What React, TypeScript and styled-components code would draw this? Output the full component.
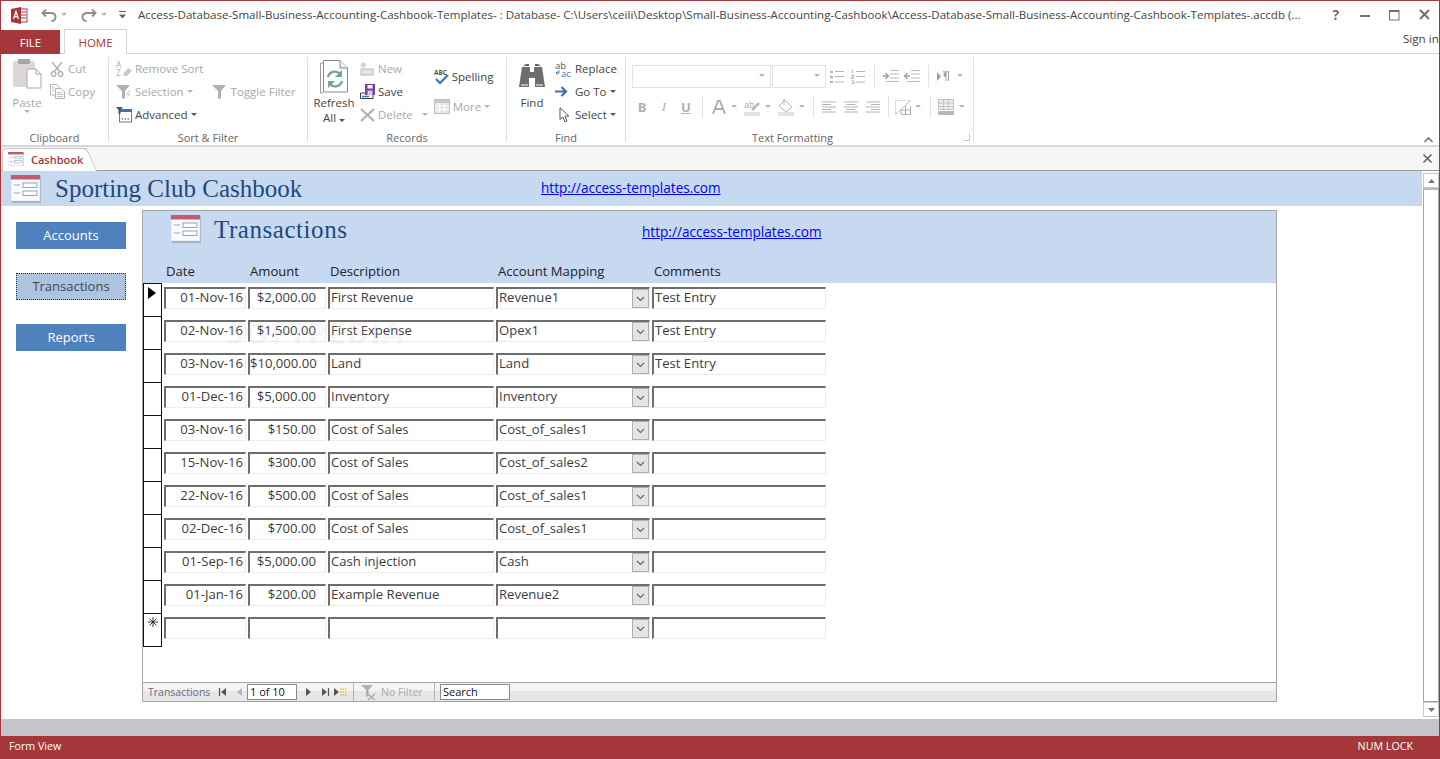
import React from "react";
import styled, { createGlobalStyle } from "styled-components";

const GlobalStyle = createGlobalStyle`
    html, body { margin: 0; padding: 0; background: #fff; }
    body { font-family: "Open Sans", "Noto Sans", sans-serif; overflow: hidden; }
    * { box-sizing: border-box; }
`;

const RED = "#a4373a";
const BAND = "#c6d9f0";

const Window = styled.div`
    position: relative;
    width: 1440px;
    height: 759px;
    display: flex;
    flex-direction: column;
    border: 1px solid ${RED};
    border-bottom: 0;
    overflow: hidden;
`;

// Title bar

const TitleBar = styled.div`
    height: 28px;
    flex: none;
    display: flex;
    align-items: center;
    padding-left: 10px;
`;
const QuickIcon = styled.span<{ $w: number; $ml?: number }>`
    width: ${({ $w }) => $w}px;
    margin-left: ${({ $ml }) => $ml || 0}px;
    flex: none;
    display: flex;
    align-items: center;
    justify-content: center;
`;
const TitleText = styled.div`
    width: 1176px;
    margin-left: 12px;
    margin-top: -1px;
    flex: none;
    font-size: 11.55px;
    color: #444;
    white-space: nowrap;
    overflow: hidden;
`;
const WindowButtons = styled.div`
    margin-left: auto;
    display: flex;
    align-items: center;
`;
const WindowButton = styled.span`
    width: 29.5px;
    display: flex;
    justify-content: center;
    color: #6f6f6f;
    font-weight: 700;
    font-size: 14px;
    line-height: 16px;
`;

// Tabs

const TabRow = styled.div`
    height: 25px;
    flex: none;
    display: flex;
    align-items: flex-end;
    position: relative;
    border-bottom: 1px solid #d4d4d4;
`;
const FileTab = styled.div`
    width: 59px;
    height: 24px;
    margin-bottom: -1px;
    background: ${RED};
    color: #fff;
    font-size: 11.5px;
    display: flex;
    align-items: center;
    justify-content: center;
`;
const HomeTab = styled.div`
    width: 63px;
    height: 25px;
    margin-left: 4px;
    margin-bottom: -1px;
    background: #fff;
    border: 1px solid #d4d4d4;
    border-bottom: 0;
    color: ${RED};
    font-size: 11.5px;
    display: flex;
    align-items: center;
    justify-content: center;
`;
const SignIn = styled.div`
    margin-left: auto;
    align-self: flex-start;
    margin-top: 1px;
    width: 36px;
    font-size: 11.6px;
    line-height: 18px;
    color: #444;
    white-space: nowrap;
`;

// Ribbon

const Ribbon = styled.div`
    height: 93px;
    flex: none;
    display: flex;
    padding-top: 3px;
    border-bottom: 2px solid #d8d8d8;
`;
const Group = styled.div<{ $w: number }>`
    width: ${({ $w }) => $w}px;
    height: 85px;
    flex: none;
    display: flex;
    flex-direction: column;
    border-right: 1px solid #e0e0e0;
    position: relative;
`;
const GroupBody = styled.div`
    flex: 1;
    display: flex;
    align-items: flex-start;
    min-height: 0;
`;
const GroupLabel = styled.div<{ $pr?: number }>`
    height: 15px;
    margin-bottom: -3px;
    padding-right: ${({ $pr }) => $pr || 0}px;
    font-size: 11px;
    line-height: 15px;
    color: #666;
    text-align: center;
`;
const ItemColumn = styled.div<{ $ml?: number; $pt?: number }>`
    display: flex;
    flex-direction: column;
    margin-left: ${({ $ml }) => $ml || 0}px;
    padding-top: ${({ $pt }) => $pt || 0}px;
    flex: none;
`;
const Item = styled.div<{ $off?: boolean; $h?: number }>`
    height: ${({ $h }) => $h || 23}px;
    display: flex;
    align-items: center;
    font-size: 11.5px;
    white-space: nowrap;
    color: ${({ $off }) => ($off ? "#a8a8a8" : "#444")};
`;
const ItemIcon = styled.span<{ $w?: number; $ml?: number; $pl?: number }>`
    width: ${({ $w }) => $w || 19}px;
    margin-left: ${({ $ml }) => $ml || 0}px;
    padding-left: ${({ $pl }) => $pl || 0}px;
    flex: none;
    display: flex;
    align-items: center;
    justify-content: flex-start;
`;
const BigButton = styled.div<{ $off?: boolean; $w: number; $ml?: number }>`
    width: ${({ $w }) => $w}px;
    margin-left: ${({ $ml }) => $ml || 0}px;
    flex: none;
    display: flex;
    flex-direction: column;
    align-items: center;
    font-size: 11.5px;
    line-height: 15px;
    color: ${({ $off }) => ($off ? "#a8a8a8" : "#444")};
`;
const BigIcon = styled.div<{ $h: number; $mb: number }>`
    height: ${({ $h }) => $h}px;
    margin-bottom: ${({ $mb }) => $mb}px;
    display: flex;
    align-items: flex-end;
    justify-content: center;
`;
const Caret = styled.span<{ $off?: boolean; $ml?: number }>`
    display: inline-block;
    width: 0;
    height: 0;
    margin-left: ${({ $ml }) => ($ml === undefined ? 3 : $ml)}px;
    border-left: 3px solid transparent;
    border-right: 3px solid transparent;
    border-top: 3px solid ${({ $off }) => ($off ? "#b4b4b4" : "#555")};
`;
const TextFormatBody = styled.div`
    padding: 7px 0 0 6px;
    flex: 1;
`;
const ToolRow = styled.div<{ $mt?: number }>`
    height: 24px;
    margin-top: ${({ $mt }) => $mt || 0}px;
    display: flex;
    align-items: center;
`;
const Combo = styled.div<{ $w: number; $ml?: number }>`
    width: ${({ $w }) => $w}px;
    height: 23px;
    margin-left: ${({ $ml }) => $ml || 0}px;
    flex: none;
    border: 1px solid #e2e2e2;
    display: flex;
    align-items: center;
    justify-content: flex-end;
    padding-right: 5px;
`;
const Cell = styled.div<{ $w: number; $ml?: number }>`
    width: ${({ $w }) => $w}px;
    margin-left: ${({ $ml }) => $ml || 0}px;
    flex: none;
    display: flex;
    align-items: center;
    justify-content: center;
    color: #b0b0b0;
    font-size: 13px;
    line-height: 16px;
`;
const BoldCell = styled(Cell)`
    font-weight: 700;
`;
const ItalicCell = styled(Cell)`
    font-style: italic;
    font-family: "Liberation Serif", serif;
`;
const UnderlineCell = styled(Cell)`
    font-weight: 700;
    text-decoration: underline;
`;
const ToolSep = styled.div<{ $ml?: number }>`
    width: 1px;
    height: 22px;
    margin-left: ${({ $ml }) => $ml || 0}px;
    flex: none;
    background: #e2e2e2;
`;
const LauncherSpot = styled.span`
    position: absolute;
    right: 3px;
    bottom: 1px;
    width: 7px;
    height: 7px;
    border-left: 1px solid #c8c8c8;
    border-top: 1px solid #c8c8c8;
    transform: rotate(180deg);
`;
const Collapse = styled.div`
    margin-left: auto;
    align-self: flex-end;
    margin-bottom: 2px;
    margin-right: 6px;
    display: flex;
`;

// Document tabs

const DocTabs = styled.div`
    height: 24px;
    flex: none;
    display: flex;
    align-items: flex-end;
    background: #f6f6f6;
    border-bottom: 1px solid #9a9a9a;
    padding-left: 1px;
`;
const DocTab = styled.div`
    position: relative;
    width: 85px;
    height: 23px;
    margin-bottom: -1px;
    background: #fff;
    border: 1px solid #c8c8c8;
    border-bottom: 0;
    border-right: 0;
    border-radius: 4px 0 0 0;
    display: flex;
    align-items: center;
    padding-left: 5px;
    padding-bottom: 2px;
    gap: 7px;
    &::after {
        content: "";
        position: absolute;
        right: -5px;
        top: -1px;
        bottom: 0;
        width: 11px;
        background: #fff;
        border-right: 1px solid #b8b8b8;
        border-top: 1px solid #c8c8c8;
        border-radius: 0 5px 0 0;
        transform: skewX(24deg);
    }
`;
const DocTabLabel = styled.span`
    position: relative;
    z-index: 1;
    color: ${RED};
    font-size: 11px;
    font-weight: 600;
`;
const DocClose = styled.div`
    margin-left: auto;
    margin-right: 7px;
    align-self: center;
    display: flex;
`;

// Form

const Content = styled.div`
    flex: 1;
    display: flex;
    min-height: 0;
`;
const FormArea = styled.div`
    width: 1421px;
    flex: none;
    display: flex;
    flex-direction: column;
`;
const FormHeader = styled.div`
    height: 35px;
    flex: none;
    background: ${BAND};
    display: flex;
    align-items: center;
    padding-left: 10px;
`;
const HeaderTitle = styled.div<{ $w: number; $ml: number; $ls: number }>`
    width: ${({ $w }) => $w}px;
    margin-left: ${({ $ml }) => $ml}px;
    flex: none;
    font-family: "Liberation Serif", "DejaVu Serif", serif;
    font-size: 25px;
    letter-spacing: ${({ $ls }) => $ls}px;
    line-height: 30px;
    color: #1f497d;
    white-space: nowrap;
`;
const Link = styled.a`
    font-size: 13.6px;
    color: #0000ff;
    text-decoration: underline;
    white-space: nowrap;
`;
const HeaderLink = styled(Link)`
    margin-top: -3px;
`;
const FormBody = styled.div`
    flex: 1;
    display: flex;
    min-height: 0;
`;
const Sidebar = styled.div`
    width: 141px;
    flex: none;
    display: flex;
    flex-direction: column;
    gap: 24px;
    padding: 16px 0 0 15px;
`;
const NavButton = styled.div<{ $focus?: boolean }>`
    width: 110px;
    height: 27px;
    padding-bottom: 2px;
    display: flex;
    align-items: center;
    justify-content: center;
    font-size: 13px;
    color: ${({ $focus }) => ($focus ? "#3a4a5c" : "#fff")};
    background: ${({ $focus }) => ($focus ? "#aec3dd" : "#4f81bd")};
    border: ${({ $focus }) => ($focus ? "1px dotted #333" : "0")};
`;

// Subform

const Subform = styled.div`
    position: relative;
    width: 1135px;
    height: 492px;
    margin-top: 4px;
    flex: none;
    display: flex;
    flex-direction: column;
    border: 1px solid #a6a6a6;
`;
const SubHeader = styled.div`
    height: 72px;
    flex: none;
    background: ${BAND};
    display: flex;
    flex-direction: column;
`;
const SubTitleRow = styled.div`
    height: 51px;
    display: flex;
    align-items: flex-start;
    padding: 4px 0 0 28px;
`;
const SubLink = styled(Link)`
    margin-top: 7px;
`;
const LabelRow = styled.div`
    display: flex;
    padding-left: 21px;
    gap: 2px;
`;
const ColLabel = styled.div<{ $w: number }>`
    width: ${({ $w }) => $w}px;
    padding-left: 2px;
    flex: none;
    font-size: 13.1px;
    line-height: 18px;
    color: #222;
`;
const Rows = styled.div`
    flex: 1;
    min-height: 0;
    padding-top: 1px;
`;
const Row = styled.div`
    height: 33px;
    display: flex;
    gap: 2px;
`;
const Selector = styled.div<{ $first?: boolean }>`
    width: 19px;
    height: ${({ $first }) => ($first ? 34 : 33)}px;
    margin-top: ${({ $first }) => ($first ? -1 : 0)}px;
    flex: none;
    border-left: 1px solid #111;
    border-right: 1px solid #111;
    border-bottom: 1px solid #111;
    border-top: ${({ $first }) => ($first ? "1px solid #111" : "0")};
    display: flex;
    justify-content: center;
    padding-top: 3px;
`;
const Field = styled.div<{ $w: number; $pr?: number; $right?: boolean }>`
    position: relative;
    width: ${({ $w }) => $w}px;
    height: 22px;
    margin-top: 3px;
    flex: none;
    border-top: 2px solid #6e6e6e;
    border-left: 2px solid #6e6e6e;
    border-right: 1px solid #ececec;
    border-bottom: 1px solid #ececec;
    font-size: 13.1px;
    line-height: 16px;
    color: #3c3c3c;
    padding-left: ${({ $right }) => ($right ? 0 : 1)}px;
    padding-right: ${({ $pr }) => $pr || 0}px;
    text-align: ${({ $right }) => ($right ? "right" : "left")};
    white-space: nowrap;
    background: #fff;
`;
const DropButton = styled.span`
    position: absolute;
    right: 0;
    top: 0;
    width: 17px;
    height: 19px;
    background: #e4e4e4;
    border: 1px solid #b0b0b0;
    display: flex;
    align-items: center;
    justify-content: center;
`;
const Watermark = styled.div`
    position: absolute;
    left: 84px;
    top: 100px;
    font-size: 31px;
    font-weight: 700;
    letter-spacing: 1px;
    color: rgba(190, 190, 190, 0.14);
    pointer-events: none;
`;

// Record navigation bar

const RecordBar = styled.div`
    height: 19px;
    flex: none;
    display: flex;
    align-items: center;
    background: linear-gradient(#f4f4f4 0, #f4f4f4 45%, #e6e7e9 46%, #e6e7e9 100%);
    border-top: 1px solid #a6a6a6;
    padding-left: 5px;
    font-size: 10.5px;
    color: #6b6b78;
    white-space: nowrap;
`;
const RecordLabel = styled.span`
    width: 71px;
    flex: none;
`;
const NavGlyph = styled.span<{ $w: number; $ml?: number }>`
    width: ${({ $w }) => $w}px;
    margin-left: ${({ $ml }) => $ml || 0}px;
    flex: none;
    display: flex;
    align-items: center;
    justify-content: center;
`;
const RecordInput = styled.div<{ $w: number; $ml?: number }>`
    width: ${({ $w }) => $w}px;
    height: 16px;
    margin-left: ${({ $ml }) => $ml || 0}px;
    flex: none;
    border: 1px solid #8a8a8a;
    background: #fff;
    color: #111;
    font-size: 11px;
    line-height: 14px;
    padding-left: 2px;
`;
const BarDivider = styled.span<{ $ml: number }>`
    width: 1px;
    height: 18px;
    margin-left: ${({ $ml }) => $ml}px;
    flex: none;
    background: #b4b4b4;
`;
const NoFilter = styled.span`
    margin-left: 4px;
    width: 53px;
    flex: none;
    color: #ababab;
`;

// Scroll bar + bottom

const ScrollBar = styled.div`
    width: 16px;
    margin: 2px 0 2px 1px;
    flex: none;
    display: flex;
    flex-direction: column;
`;
const ScrollButton = styled.div`
    height: 15px;
    flex: none;
    border: 1px solid #c8c8c8;
    display: flex;
    align-items: center;
    justify-content: center;
`;
const ScrollTrack = styled.div`
    flex: 1;
    border-left: 1px solid #a8a8a8;
    border-right: 1px solid #a8a8a8;
    border-top: 2px solid #b8b8b8;
    border-bottom: 1px solid #a8a8a8;
`;
const GrayBand = styled.div`
    height: 17px;
    flex: none;
    background: #c4c5c8;
`;
const StatusBar = styled.div`
    height: 23px;
    flex: none;
    margin: 0 -1px;
    background: ${RED};
    color: #fff;
    font-size: 10.7px;
    display: flex;
    align-items: center;
    justify-content: space-between;
    padding: 0 27px 3px 9px;
`;

// Icons

const Svg = ({ w, h, children }: { w: number; h: number; children: React.ReactNode }) => (
    <svg width={w} height={h} viewBox={`0 0 ${w} ${h}`} fill="none" style={{ display: "block", overflow: "visible" }}>{children}</svg>
);

const AccessLogo = () => (
    <Svg w={17} h={17}>
        <rect x="6" y="2" width="10" height="13" fill="#fff" stroke="#a4373a" />
        <path d="M10 5h5M10 8h5M10 11h5" stroke="#a4373a" />
        <path d="M0 2 L10 0 V17 L0 15 Z" fill="#a4373a" />
        <path d="M2.5 12 L5 4.5 L7.5 12 M3.5 9.7 H6.5" stroke="#fff" strokeWidth="1.2" />
    </Svg>
);
const UndoIcon = () => (
    <Svg w={16} h={14}>
        <path d="M5 1.5 L1.5 5 L5 8.5" stroke="#8f8f8f" strokeWidth="2" />
        <path d="M2 5 H9.5 C13 5 14.5 7 14.5 9 C14.5 11 13 13 10.5 13" stroke="#8f8f8f" strokeWidth="2" />
    </Svg>
);
const RedoIcon = () => (
    <Svg w={16} h={14}>
        <path d="M11 1.5 L14.5 5 L11 8.5" stroke="#8f8f8f" strokeWidth="2" />
        <path d="M14 5 H6.5 C3 5 1.5 7 1.5 9 C1.5 11 3 13 5.5 13" stroke="#8f8f8f" strokeWidth="2" />
    </Svg>
);
const SmallDown = ({ color = "#b8b8b8" }: { color?: string }) => (
    <Svg w={6} h={4}><path d="M0 0 H6 L3 3 Z" fill={color} /></Svg>
);
const CustomizeIcon = () => (
    <Svg w={7} h={8}>
        <path d="M0 .5 H7" stroke="#666" />
        <path d="M0 3.5 H7 L3.5 7.5 Z" fill="#666" />
    </Svg>
);
const PasteIcon = () => (
    <Svg w={30} h={32}>
        <rect x="1" y="3" width="22" height="26" rx="2" fill="#dbd7d7" />
        <rect x="6" y="1" width="12" height="5" rx="1" fill="#a8a4a4" />
        <path d="M15 11 H24 L29 16 V30 H15 Z" fill="#fff" stroke="#a8a8a8" />
        <path d="M24 11 V16 H29" stroke="#a8a8a8" />
    </Svg>
);
const CutIcon = () => (
    <Svg w={15} h={16}>
        <path d="M2 1 L10 11 M12 1 L4 11" stroke="#b0b0b0" strokeWidth="1.4" />
        <circle cx="3.5" cy="13" r="2.4" stroke="#b0b0b0" strokeWidth="1.2" />
        <circle cx="10.5" cy="13" r="2.4" stroke="#b0b0b0" strokeWidth="1.2" />
    </Svg>
);
const CopyIcon = () => (
    <Svg w={15} h={15}>
        <path d="M.5 .5 H7 L9 3 V11 H.5 Z" fill="#fff" stroke="#b8b8b8" />
        <path d="M5.5 4.5 H11 L14.5 8 V14.5 H5.5 Z" fill="#fff" stroke="#b0b0b0" />
        <path d="M7 8.5 H12 M7 10.5 H13 M7 12.5 H13 M2 3 H5 M2 5 H4 M2 7 H4" stroke="#c0c0c0" />
    </Svg>
);
const RemoveSortIcon = () => (
    <Svg w={17} h={17}>
        <text x="0" y="7.5" fontSize="8.5" fill="#b0b0b0" fontFamily="Open Sans, sans-serif">A</text>
        <text x="0" y="16" fontSize="8.5" fill="#b0b0b0" fontFamily="Open Sans, sans-serif">Z</text>
        <path d="M7 14 L12 8 L16 10.5 L11 16 H8 Z" fill="#c8c8c8" />
    </Svg>
);
const FunnelIcon = ({ bolt, color = "#b0b0b0" }: { bolt?: boolean; color?: string }) => (
    <Svg w={16} h={16}>
        <path d="M0 1 H14 L9 7 V14 L6 15 V7 Z" fill={color} />
        {bolt && <path d="M13 6 L9.5 11 H12 L10.5 15.5 L15 9.5 H12.5 L15 6 Z" fill="#d0d0d0" stroke="#fff" strokeWidth=".5" />}
    </Svg>
);
const AdvancedIcon = () => (
    <Svg w={16} h={16}>
        <rect x="3.5" y="2.5" width="12" height="12.5" fill="#fff" stroke="#777" />
        <rect x="3" y="2" width="13" height="3" fill="#3f72b0" />
        <path d="M0 0 H7 L4.5 3 V7 L2.5 7 V3 Z" fill="#555" />
        <path d="M5.5 12 H7 M8.5 12 H10 M11.5 12 H13" stroke="#444" strokeWidth="1.2" />
    </Svg>
);
const RefreshIcon = () => (
    <Svg w={29} h={34}>
        <path d="M.5 3 H3 M.5 3 V33 H3" stroke="#999" />
        <path d="M3.5 .5 H20 L27.5 8 V32 H3.5 Z" fill="#fff" stroke="#888" />
        <path d="M20 .5 V8 H27.5" fill="#f0f0f0" stroke="#888" />
        <path d="M8 17 A7 7 0 0 1 20 14 M22 21 A7 7 0 0 1 10 24" stroke="#6fa98f" strokeWidth="2.4" />
        <path d="M22 10 V17 H15 Z" fill="#6fa98f" />
        <path d="M8 28 V21 H15 Z" fill="#6fa98f" />
    </Svg>
);
const NewIcon = () => (
    <Svg w={14} h={14}>
        <rect x="1" y="7" width="12" height="6" fill="#e4e4e4" stroke="#b8b8b8" />
        <path d="M3.5 0 V6 M.5 3 H6.5 M1.5 1 L5.5 5 M5.5 1 L1.5 5" stroke="#c8c8c8" />
    </Svg>
);
const SaveIcon = () => (
    <Svg w={16} h={16}>
        <path d="M.5 9 H13 V14.5 H.5 Z" fill="#fff" stroke="#3b3b3b" />
        <rect x="5" y="0" width="10" height="11" fill="#7a3e9d" />
        <rect x="7.5" y="1" width="5" height="3.5" fill="#fff" />
        <rect x="7.5" y="6.5" width="5" height="4.5" fill="#d9c8e4" />
        <path d="M2 12.5 H9" stroke="#3f72b0" strokeWidth="1.5" />
    </Svg>
);
const DeleteIcon = () => (
    <Svg w={15} h={14}>
        <path d="M1 1 L14 13 M14 1 L1 13" stroke="#b0b0b0" strokeWidth="2.2" />
    </Svg>
);
const SpellingIcon = () => (
    <Svg w={15} h={16}>
        <text x="0" y="6.5" fontSize="6.5" fontWeight="700" fill="#555" fontFamily="Open Sans, sans-serif">ABC</text>
        <path d="M2 11 L6 15 L14 7" stroke="#3f72b0" strokeWidth="2.2" />
    </Svg>
);
const MoreIcon = () => (
    <Svg w={16} h={15}>
        <rect x=".5" y=".5" width="15" height="14" fill="#e8e4e4" stroke="#c0c0c0" />
        <rect x="1" y="1" width="14" height="3" fill="#c8c8c8" />
        <path d="M1 7 H15 M1 10.5 H15 M5.5 4 V14 M10.5 4 V14" stroke="#fff" />
    </Svg>
);
const FindIcon = () => (
    <Svg w={26} h={25}>
        <path d="M4 3 H10 V1 H7 L4 3 Z M16 1 H19 L22 3 H16 Z" fill="#666" />
        <path d="M3 4 H11 V9 H15 V4 H23 L26 24 H16 V15 H10 V24 H0 Z" fill="#6e6e6e" />
        <path d="M2 22 H9 M17 22 H24" stroke="#fff" strokeWidth="1" />
    </Svg>
);
const ReplaceIcon = () => (
    <Svg w={17} h={16}>
        <text x="0" y="7.5" fontSize="9.5" fill="#555" fontFamily="Open Sans, sans-serif">ab</text>
        <text x="6" y="15.5" fontSize="9.5" fill="#3f72b0" fontFamily="Open Sans, sans-serif">ac</text>
        <path d="M4 9.5 V12 H1 M2.5 10.5 L1 12 L2.5 13.5" stroke="#3f72b0" />
    </Svg>
);
const GoToIcon = () => (
    <Svg w={13} h={11}>
        <path d="M0 5.5 H10 M6.5 1 L11 5.5 L6.5 10" stroke="#3f72b0" strokeWidth="2.2" />
    </Svg>
);
const SelectIcon = () => (
    <Svg w={11} h={16}>
        <path d="M1 .8 V12.5 L3.8 10 L6 15 L8 14 L6 9.3 L9.8 9 Z" fill="#fff" stroke="#555" />
    </Svg>
);
const ListIcon = ({ numbered }: { numbered?: boolean }) => (
    <Svg w={14} h={15}>
        {numbered
            ? <path d="M1.5 1 V4 M.5 6.5 H3 V8 H.5 V9.5 H3 M.5 12 H3 V14.5 H.5" stroke="#b4b4b4" />
            : <path d="M0 2 H3 V4 H0 Z M0 7 H3 V9 H0 Z M0 12 H3 V14 H0 Z" fill="#b4b4b4" />}
        <path d="M5 2.5 H14 M5 7.5 H14 M5 13 H14" stroke="#b4b4b4" />
    </Svg>
);
const IndentIcon = ({ out }: { out?: boolean }) => (
    <Svg w={16} h={12}>
        <path d="M7 .5 H16 M7 4 H16 M7 8 H16 M3 11.5 H16" stroke="#b8b8b8" />
        {out
            ? <path d="M6 6 H1 M3.5 3 L.5 6 L3.5 9" stroke="#a0a0a0" strokeWidth="1.3" />
            : <path d="M0 6 H5 M2.5 3 L5.5 6 L2.5 9" stroke="#a0a0a0" strokeWidth="1.3" />}
    </Svg>
);
const ParaIcon = () => (
    <Svg w={13} h={11}>
        <path d="M0 1 V10 L4 5.5 Z" fill="#a0a0a0" />
        <path d="M9 1 V10 M11.5 1 V10 M6 .8 H12.5" stroke="#a0a0a0" />
        <path d="M9 1 A2.5 2.5 0 0 0 9 6 Z" fill="#a0a0a0" />
    </Svg>
);
const FontColorIcon = () => (
    <Svg w={16} h={16}>
        <path d="M2 15 L7 2 H9 L14 15 M4.5 10 H11.5" stroke="#b0b0b0" strokeWidth="2" />
    </Svg>
);
const HighlightIcon = () => (
    <Svg w={16} h={17}>
        <text x="0" y="9" fontSize="9" fill="#a8a8a8" fontFamily="Open Sans, sans-serif">ab</text>
        <path d="M7 11 L14 3 L16 5 L9 12 Z" fill="#b8b8b8" />
        <rect x="0" y="13" width="16" height="4" fill="#e4e4e4" />
    </Svg>
);
const BucketIcon = () => (
    <Svg w={16} h={17}>
        <path d="M7 1 L14 8 L8 13 L1 7 Z" fill="#fff" stroke="#b4b4b4" />
        <path d="M6 0 V6" stroke="#b4b4b4" />
        <rect x="0" y="13" width="16" height="4" fill="#e4e4e4" />
    </Svg>
);
const AlignIcon = ({ mode }: { mode: "l" | "c" | "r" }) => {
    const short = mode === "l" ? "M0 3.5 H9 M0 8.5 H9" : mode === "c" ? "M2.5 3.5 H11.5 M2.5 8.5 H11.5" : "M5 3.5 H14 M5 8.5 H14";
    return (
        <Svg w={14} h={12}>
            <path d={`M0 1 H14 M0 6 H14 M0 11 H14 ${short}`} stroke="#b4b4b4" />
        </Svg>
    );
};
const AltRowIcon = () => (
    <Svg w={16} h={15}>
        <path d="M.5 14.5 V.5 H15.5" stroke="#b8b8b8" strokeDasharray="1 1" />
        <path d="M1 14 L15 1" stroke="#b8b8b8" />
        <path d="M6 14.5 H15.5 V6 M6 10 H15.5 M10.5 6 V14.5 M6 10 V14.5" stroke="#b0b0b0" />
    </Svg>
);
const GridLinesIcon = () => (
    <Svg w={16} h={16}>
        <rect x=".5" y=".5" width="15" height="10" fill="#eee" stroke="#c0c0c0" />
        <path d="M1 4 H15 M1 7.5 H15 M5.5 1 V10 M10.5 1 V10" stroke="#c4c4c4" />
        <rect x="0" y="12" width="16" height="4" fill="#b8b8b8" />
    </Svg>
);
const CollapseIcon = () => (
    <Svg w={9} h={6}>
        <path d="M.5 5 L4.5 1 L8.5 5" stroke="#777" strokeWidth="1.6" />
    </Svg>
);
const CloseSmall = () => (
    <Svg w={9} h={9}>
        <path d="M.5 .5 L8.5 8.5 M8.5 .5 L.5 8.5" stroke="#555" strokeWidth="1.3" />
    </Svg>
);
const FormIcon = ({ size = 30 }: { size?: number }) => (
    <svg width={size} height={(size * 28) / 30} viewBox="0 0 30 28" style={{ display: "block", flex: "none" }}>
        <rect x="1" y="1" width="29" height="27" fill="#7f8ea3" opacity=".55" />
        <rect x="0" y="0" width="29" height="26" fill="#fafbfd" stroke="#c8ced8" strokeWidth=".6" />
        <rect x="0" y="0" width="29" height="4.5" fill="#c25b70" />
        <path d="M3 10 H9 M3 18 H9" stroke="#9aa8c0" strokeWidth="1.2" />
        <rect x="12" y="8" width="14" height="4.5" fill="#fff" stroke="#8ea3c4" />
        <rect x="12" y="16" width="14" height="4.5" fill="#fff" stroke="#8ea3c4" />
    </svg>
);
const RecordArrow = () => (
    <Svg w={9} h={12}><path d="M0 0 L8 6 L0 12 Z" fill="#000" /></Svg>
);
const StarGlyph = () => (
    <Svg w={10} h={10}>
        <path d="M5 0 V10 M0 5 H10 M1.5 1.5 L8.5 8.5 M8.5 1.5 L1.5 8.5" stroke="#222" strokeWidth=".9" />
    </Svg>
);
const Chevron = () => (
    <Svg w={9} h={6}><path d="M1 1 L4.5 4.5 L8 1" stroke="#666" strokeWidth="1.1" /></Svg>
);
const NavFirst = () => (
    <Svg w={7} h={8}><path d="M.5 0 V8" stroke="#555" strokeWidth="1.2" /><path d="M7 0 L2 4 L7 8 Z" fill="#555" /></Svg>
);
const NavPrev = () => <Svg w={5} h={8}><path d="M5 0 L0 4 L5 8 Z" fill="#b4b4b4" /></Svg>;
const NavNext = () => <Svg w={5} h={8}><path d="M0 0 L5 4 L0 8 Z" fill="#555" /></Svg>;
const NavLast = () => (
    <Svg w={7} h={8}><path d="M0 0 L5 4 L0 8 Z" fill="#555" /><path d="M6.5 0 V8" stroke="#555" strokeWidth="1.2" /></Svg>
);
const NavNew = () => (
    <Svg w={13} h={8}>
        <path d="M0 0 L5 4 L0 8 Z" fill="#555" />
        <path d="M6 1 H12.5 M6 4 H12.5 M6 7 H12.5" stroke="#e8c84a" strokeWidth="1.6" strokeDasharray="1.6 .8" />
    </Svg>
);
const NoFilterIcon = () => (
    <Svg w={16} h={15}>
        <path d="M0 0 H12 L7.5 5 V11 L5 12 V5 Z" fill="#b0b0b0" />
        <path d="M7 9 L14 15 M14 9 L7 15" stroke="#a8a8a8" strokeWidth="1.4" />
    </Svg>
);

// Data

interface Txn {
    date: string;
    amount: string;
    description: string;
    mapping: string;
    comments: string;
}

const COLS = [82, 78, 166, 154, 174];

const transactions: Txn[] = [
    { date: "01-Nov-16", amount: "$2,000.00", description: "First Revenue", mapping: "Revenue1", comments: "Test Entry" },
    { date: "02-Nov-16", amount: "$1,500.00", description: "First Expense", mapping: "Opex1", comments: "Test Entry" },
    { date: "03-Nov-16", amount: "$10,000.00", description: "Land", mapping: "Land", comments: "Test Entry" },
    { date: "01-Dec-16", amount: "$5,000.00", description: "Inventory", mapping: "Inventory", comments: "" },
    { date: "03-Nov-16", amount: "$150.00", description: "Cost of Sales", mapping: "Cost_of_sales1", comments: "" },
    { date: "15-Nov-16", amount: "$300.00", description: "Cost of Sales", mapping: "Cost_of_sales2", comments: "" },
    { date: "22-Nov-16", amount: "$500.00", description: "Cost of Sales", mapping: "Cost_of_sales1", comments: "" },
    { date: "02-Dec-16", amount: "$700.00", description: "Cost of Sales", mapping: "Cost_of_sales1", comments: "" },
    { date: "01-Sep-16", amount: "$5,000.00", description: "Cash injection", mapping: "Cash", comments: "" },
    { date: "01-Jan-16", amount: "$200.00", description: "Example Revenue", mapping: "Revenue2", comments: "" },
    { date: "", amount: "", description: "", mapping: "", comments: "" },
];

const TITLE = "Access-Database-Small-Business-Accounting-Cashbook-Templates- : Database- C:\\Users\\ceili\\Desktop\\Small-Business-Accounting-Cashbook\\Access-Database-Small-Business-Accounting-Cashbook-Templates-.accdb (...";

const App = () => {
    return (
        <Window>
            <GlobalStyle />
            <TitleBar>
                <QuickIcon $w={17}><AccessLogo /></QuickIcon>
                <QuickIcon $w={16} $ml={13}><UndoIcon /></QuickIcon>
                <QuickIcon $w={6} $ml={4}><SmallDown /></QuickIcon>
                <QuickIcon $w={16} $ml={14}><RedoIcon /></QuickIcon>
                <QuickIcon $w={6} $ml={4}><SmallDown /></QuickIcon>
                <QuickIcon $w={7} $ml={12}><CustomizeIcon /></QuickIcon>
                <TitleText>{TITLE}</TitleText>
                <WindowButtons>
                    <WindowButton>?</WindowButton>
                    <WindowButton><Svg w={10} h={16}><path d="M0 9 H10" stroke="#6f6f6f" strokeWidth="2" /></Svg></WindowButton>
                    <WindowButton><Svg w={11} h={16}><rect x=".5" y="3.5" width="9.5" height="9.5" stroke="#6f6f6f" /><path d="M0 4 H10" stroke="#6f6f6f" strokeWidth="2" /></Svg></WindowButton>
                    <WindowButton><Svg w={11} h={16}><path d="M1 3 L10 12 M10 3 L1 12" stroke="#6f6f6f" strokeWidth="2" /></Svg></WindowButton>
                </WindowButtons>
            </TitleBar>

            <TabRow>
                <FileTab>FILE</FileTab>
                <HomeTab>HOME</HomeTab>
                <SignIn>Sign in</SignIn>
            </TabRow>

            <Ribbon>
                <Group $w={108}>
                    <GroupBody>
                        <BigButton $off $w={30} $ml={11}>
                            <BigIcon $h={33} $mb={5}><PasteIcon /></BigIcon>
                            <div>Paste</div>
                            <Caret $off $ml={0} />
                        </BigButton>
                        <ItemColumn $ml={8}>
                            <Item $off><ItemIcon $w={18}><CutIcon /></ItemIcon>Cut</Item>
                            <Item $off><ItemIcon $w={18}><CopyIcon /></ItemIcon>Copy</Item>
                        </ItemColumn>
                    </GroupBody>
                    <GroupLabel>Clipboard</GroupLabel>
                </Group>

                <Group $w={199}>
                    <GroupBody>
                        <ItemColumn $ml={7}>
                            <Item $off><ItemIcon><RemoveSortIcon /></ItemIcon>Remove Sort</Item>
                            <Item $off>
                                <ItemIcon><FunnelIcon bolt /></ItemIcon>Selection<Caret $off />
                                <ItemIcon $ml={19}><FunnelIcon /></ItemIcon>Toggle Filter
                            </Item>
                            <Item><ItemIcon><AdvancedIcon /></ItemIcon>Advanced<Caret /></Item>
                        </ItemColumn>
                    </GroupBody>
                    <GroupLabel>Sort &amp; Filter</GroupLabel>
                </Group>

                <Group $w={199}>
                    <GroupBody>
                        <BigButton $w={40} $ml={6}>
                            <BigIcon $h={37} $mb={1}><RefreshIcon /></BigIcon>
                            <div>Refresh</div>
                            <div>All<Caret /></div>
                        </BigButton>
                        <ItemColumn $ml={6}>
                            <Item $off><ItemIcon $w={18}><NewIcon /></ItemIcon>New</Item>
                            <Item><ItemIcon $w={18}><SaveIcon /></ItemIcon>Save</Item>
                            <Item $off><ItemIcon $w={18}><DeleteIcon /></ItemIcon>Delete<Caret $off $ml={9} /></Item>
                        </ItemColumn>
                        <ItemColumn $ml={6} $pt={4}>
                            <Item $h={30}><ItemIcon $w={18}><SpellingIcon /></ItemIcon>Spelling</Item>
                            <Item $h={30} $off><ItemIcon $w={19}><MoreIcon /></ItemIcon>More<Caret $off /></Item>
                        </ItemColumn>
                    </GroupBody>
                    <GroupLabel>Records</GroupLabel>
                </Group>

                <Group $w={119}>
                    <GroupBody>
                        <BigButton $w={30} $ml={10}>
                            <BigIcon $h={31} $mb={7}><FindIcon /></BigIcon>
                            <div>Find</div>
                        </BigButton>
                        <ItemColumn $ml={8}>
                            <Item><ItemIcon $w={20}><ReplaceIcon /></ItemIcon>Replace</Item>
                            <Item><ItemIcon $w={20}><GoToIcon /></ItemIcon>Go To<Caret /></Item>
                            <Item><ItemIcon $w={20} $pl={4}><SelectIcon /></ItemIcon>Select<Caret /></Item>
                        </ItemColumn>
                    </GroupBody>
                    <GroupLabel>Find</GroupLabel>
                </Group>

                <Group $w={348}>
                    <TextFormatBody>
                        <ToolRow>
                            <Combo $w={139}><SmallDown /></Combo>
                            <Combo $w={54} $ml={1}><SmallDown /></Combo>
                            <Cell $w={22}><ListIcon /></Cell>
                            <Cell $w={20}><ListIcon numbered /></Cell>
                            <ToolSep $ml={6} />
                            <Cell $w={20} $ml={6}><IndentIcon /></Cell>
                            <Cell $w={20} $ml={1}><IndentIcon out /></Cell>
                            <ToolSep $ml={6} />
                            <Cell $w={16} $ml={6}><ParaIcon /></Cell>
                            <Cell $w={10} $ml={4}><SmallDown /></Cell>
                        </ToolRow>
                        <ToolRow $mt={7}>
                            <BoldCell $w={20}>B</BoldCell>
                            <ItalicCell $w={20} $ml={2}>I</ItalicCell>
                            <UnderlineCell $w={20} $ml={2}>U</UnderlineCell>
                            <ToolSep $ml={6} />
                            <Cell $w={20} $ml={6}><FontColorIcon /></Cell>
                            <Cell $w={10}><SmallDown /></Cell>
                            <Cell $w={18} $ml={4}><HighlightIcon /></Cell>
                            <Cell $w={10} $ml={2}><SmallDown /></Cell>
                            <Cell $w={18} $ml={4}><BucketIcon /></Cell>
                            <Cell $w={10} $ml={2}><SmallDown /></Cell>
                            <ToolSep $ml={6} />
                            <Cell $w={14} $ml={8}><AlignIcon mode="l" /></Cell>
                            <Cell $w={14} $ml={8}><AlignIcon mode="c" /></Cell>
                            <Cell $w={14} $ml={8}><AlignIcon mode="r" /></Cell>
                            <ToolSep $ml={8} />
                            <Cell $w={16} $ml={6}><AltRowIcon /></Cell>
                            <Cell $w={10} $ml={2}><SmallDown /></Cell>
                            <ToolSep $ml={7} />
                            <Cell $w={16} $ml={7}><GridLinesIcon /></Cell>
                            <Cell $w={10} $ml={3}><SmallDown /></Cell>
                        </ToolRow>
                    </TextFormatBody>
                    <GroupLabel $pr={14}>Text Formatting</GroupLabel>
                    <LauncherSpot />
                </Group>

                <Collapse><CollapseIcon /></Collapse>
            </Ribbon>

            <DocTabs>
                <DocTab><FormIcon size={16} /><DocTabLabel>Cashbook</DocTabLabel></DocTab>
                <DocClose><CloseSmall /></DocClose>
            </DocTabs>

            <Content>
                <FormArea>
                    <FormHeader>
                        <FormIcon />
                        <HeaderTitle $w={486} $ml={14} $ls={0}>Sporting Club Cashbook</HeaderTitle>
                        <HeaderLink>http://access-templates.com</HeaderLink>
                    </FormHeader>
                    <FormBody>
                        <Sidebar>
                            <NavButton>Accounts</NavButton>
                            <NavButton $focus>Transactions</NavButton>
                            <NavButton>Reports</NavButton>
                        </Sidebar>
                        <Subform>
                            <SubHeader>
                                <SubTitleRow>
                                    <FormIcon />
                                    <HeaderTitle $w={428} $ml={13} $ls={0.55}>Transactions</HeaderTitle>
                                    <SubLink>http://access-templates.com</SubLink>
                                </SubTitleRow>
                                <LabelRow>
                                    <ColLabel $w={COLS[0]}>Date</ColLabel>
                                    <ColLabel $w={COLS[1]}>Amount</ColLabel>
                                    <ColLabel $w={COLS[2]}>Description</ColLabel>
                                    <ColLabel $w={COLS[3]}>Account Mapping</ColLabel>
                                    <ColLabel $w={COLS[4]}>Comments</ColLabel>
                                </LabelRow>
                            </SubHeader>
                            <Rows>
                                {transactions.map((t, i) => (
                                    <Row key={i}>
                                        <Selector $first={i === 0}>
                                            {i === 0 && <RecordArrow />}
                                            {i === transactions.length - 1 && <StarGlyph />}
                                        </Selector>
                                        <Field $w={COLS[0]} $right $pr={2}>{t.date}</Field>
                                        <Field $w={COLS[1]} $right $pr={9}>{t.amount}</Field>
                                        <Field $w={COLS[2]}>{t.description}</Field>
                                        <Field $w={COLS[3]}>
                                            {t.mapping}
                                            <DropButton><Chevron /></DropButton>
                                        </Field>
                                        <Field $w={COLS[4]}>{t.comments}</Field>
                                    </Row>
                                ))}
                            </Rows>
                            <RecordBar>
                                <RecordLabel>Transactions</RecordLabel>
                                <NavGlyph $w={7}><NavFirst /></NavGlyph>
                                <NavGlyph $w={5} $ml={11}><NavPrev /></NavGlyph>
                                <RecordInput $w={50} $ml={5}>1 of 10</RecordInput>
                                <NavGlyph $w={5} $ml={9}><NavNext /></NavGlyph>
                                <NavGlyph $w={7} $ml={11}><NavLast /></NavGlyph>
                                <NavGlyph $w={13} $ml={5}><NavNew /></NavGlyph>
                                <BarDivider $ml={6} />
                                <NavGlyph $w={16} $ml={7}><NoFilterIcon /></NavGlyph>
                                <NoFilter>No Filter</NoFilter>
                                <BarDivider $ml={0} />
                                <RecordInput $w={70} $ml={5}>Search</RecordInput>
                            </RecordBar>
                            <Watermark>SOFTPEDIA</Watermark>
                        </Subform>
                    </FormBody>
                </FormArea>
                <ScrollBar>
                    <ScrollButton><Svg w={7} h={4}><path d="M0 4 L3.5 0 L7 4 Z" fill="#777" /></Svg></ScrollButton>
                    <ScrollTrack />
                    <ScrollButton><Svg w={7} h={4}><path d="M0 0 L3.5 4 L7 0 Z" fill="#777" /></Svg></ScrollButton>
                </ScrollBar>
            </Content>

            <GrayBand />
            <StatusBar>
                <span>Form View</span>
                <span>NUM LOCK</span>
            </StatusBar>
        </Window>
    );
};

export default App;
